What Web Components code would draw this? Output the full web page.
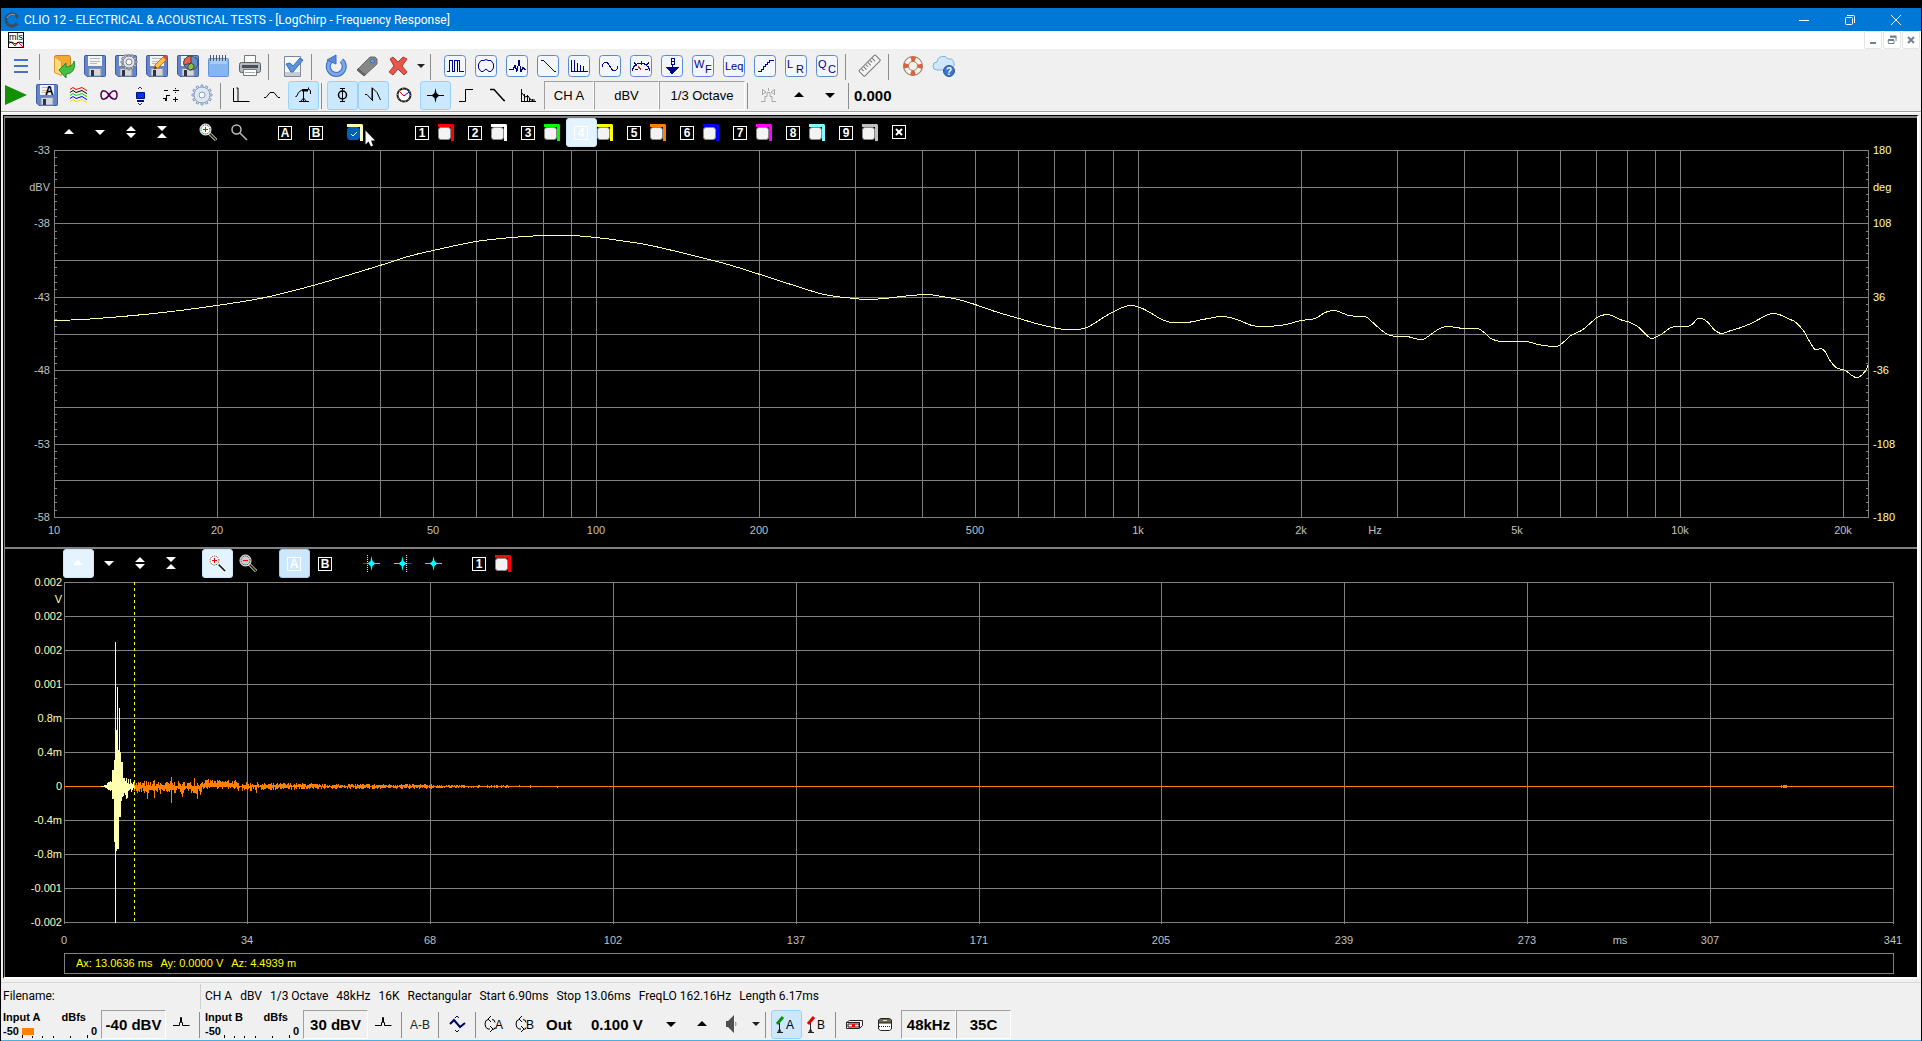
<!DOCTYPE html>
<html lang="en">
<head>
<meta charset="utf-8">
<title>CLIO 12</title>
<style>
  html, body {
    margin: 0;
    height: 100%;
    background: #000;
    font-family: "Liberation Sans", Arial, sans-serif;
    font-size: 13px;
    color: #000;
  }
</style>
</head>
<body>
<clio-window>
  <title-bar slot="title">CLIO 12 - ELECTRICAL &amp; ACOUSTICAL TESTS - [LogChirp - Frequency Response]</title-bar>
  <mdi-bar slot="title"></mdi-bar>

  <tool-bar slot="tools" class="main" aria-label="Main">
    <tool-button icon="menu" label="Menu"></tool-button>
    <tool-sep></tool-sep>
    <tool-button icon="open" label="Open"></tool-button>
    <tool-button icon="save" label="Save"></tool-button>
    <tool-button icon="saveSetup" label="Save setup"></tool-button>
    <tool-button icon="saveEdit" label="Rename"></tool-button>
    <tool-button icon="saveChart" label="Export graph"></tool-button>
    <tool-button icon="notes" label="Notes"></tool-button>
    <tool-button icon="print" label="Print"></tool-button>
    <tool-sep></tool-sep>
    <tool-button icon="options" label="Options"></tool-button>
    <tool-sep></tool-sep>
    <tool-button icon="reload" label="Reload"></tool-button>
    <tool-button icon="tag" label="Tag"></tool-button>
    <tool-button icon="remove" label="Delete"></tool-button>
    <tool-button icon="caret" label="Delete options" size="small"></tool-button>
    <tool-sep></tool-sep>
    <tool-button icon="mls" label="MLS"></tool-button>
    <tool-button icon="polar" label="Polar"></tool-button>
    <tool-button icon="impulse" label="Impulse"></tool-button>
    <tool-button icon="decay" label="Decay"></tool-button>
    <tool-button icon="fft" label="FFT"></tool-button>
    <tool-button icon="sine" label="Sinusoidal"></tool-button>
    <tool-button icon="meter" label="Multimeter"></tool-button>
    <tool-button icon="thiele" label="Thiele Small"></tool-button>
    <tool-button icon="wf" label="Wow and flutter"></tool-button>
    <tool-button icon="leq" label="Leq"></tool-button>
    <tool-button icon="linearity" label="Linearity"></tool-button>
    <tool-button icon="lr" label="Loudness"></tool-button>
    <tool-button icon="qc" label="Quality control"></tool-button>
    <tool-sep></tool-sep>
    <tool-button icon="ruler" label="Calibration"></tool-button>
    <tool-sep></tool-sep>
    <tool-button icon="buoy" label="Help"></tool-button>
    <tool-button icon="cloud" label="Online help"></tool-button>
  </tool-bar>

  <tool-bar slot="tools" class="measure" aria-label="Measurement">
    <tool-button icon="play" label="Go"></tool-button>
    <tool-button icon="autosave" label="Autosave"></tool-button>
    <tool-button icon="waves" label="Averaging"></tool-button>
    <tool-button icon="loop" label="Loop"></tool-button>
    <tool-button icon="speaker" label="Loudspeaker"></tool-button>
    <tool-button icon="math" label="Processing"></tool-button>
    <tool-button icon="gear" label="Settings"></tool-button>
    <tool-sep size="tight"></tool-sep>
    <tool-button icon="timeData" label="Time data"></tool-button>
    <tool-button icon="hump" label="Response"></tool-button>
    <tool-button icon="crane" label="Reference" state="on"></tool-button>
    <tool-sep size="tight"></tool-sep>
    <tool-button icon="phi" label="Phase" state="on"></tool-button>
    <tool-button icon="phase" label="Wrap phase" state="on"></tool-button>
    <tool-button icon="clock" label="Group delay"></tool-button>
    <tool-button icon="burst" label="Impulse response" state="on"></tool-button>
    <tool-button icon="step" label="Step response"></tool-button>
    <tool-button icon="slope" label="Schroeder decay"></tool-button>
    <tool-button icon="etc" label="ETC"></tool-button>
    <text-button style="width:50px">CH A</text-button>
    <text-button style="width:65px">dBV</text-button>
    <text-button style="width:86px">1/3 Octave</text-button>
    <tool-sep size="tight"></tool-sep>
    <tool-button icon="mirror" label="Mirror"></tool-button>
    <tool-button icon="up" label="Increase"></tool-button>
    <tool-button icon="down" label="Decrease"></tool-button>
    <tool-sep size="tight"></tool-sep>
    <value-label>0.000</value-label>
  </tool-bar>

  <chart-panel slot="charts" style="--indent:49px">
    <tool-bar slot="bar" aria-label="Frequency display">
      <tool-button icon="up" label="Scroll up" dark></tool-button>
      <tool-button icon="down" label="Scroll down" dark></tool-button>
      <tool-button icon="expand" label="Expand" dark></tool-button>
      <tool-button icon="compress" label="Compress" dark></tool-button>
      <tool-gap></tool-gap>
      <tool-button icon="zoomIn" label="Zoom in" dark></tool-button>
      <tool-button icon="zoomPlain" label="Zoom out" dark></tool-button>
      <tool-gap></tool-gap>
      <tool-button key="A" label="Marker A" dark></tool-button>
      <tool-button key="B" label="Marker B" dark></tool-button>
      <tool-gap></tool-gap>
      <curve-check label="Current curve" color="#ffffb0" checked><mouse-pointer></mouse-pointer></curve-check>
      <tool-gap wide></tool-gap>
      <tool-button key="1" label="Overlay 1" dark></tool-button><curve-check label="Show 1" color="#ff0000"></curve-check>
      <tool-button key="2" label="Overlay 2" dark></tool-button><curve-check label="Show 2" color="#ffffff"></curve-check>
      <tool-button key="3" label="Overlay 3" dark></tool-button><curve-check label="Show 3" color="#00ff00"></curve-check>
      <tool-button key="4" label="Overlay 4" dark state="hover"></tool-button><curve-check label="Show 4" color="#ffff00"></curve-check>
      <tool-button key="5" label="Overlay 5" dark></tool-button><curve-check label="Show 5" color="#ff8000"></curve-check>
      <tool-button key="6" label="Overlay 6" dark></tool-button><curve-check label="Show 6" color="#0000ff"></curve-check>
      <tool-button key="7" label="Overlay 7" dark></tool-button><curve-check label="Show 7" color="#ff00ff"></curve-check>
      <tool-button key="8" label="Overlay 8" dark></tool-button><curve-check label="Show 8" color="#80ffff"></curve-check>
      <tool-button key="9" label="Overlay 9" dark></tool-button><curve-check label="Show 9" color="#c0c0c0"></curve-check>
      <tool-button icon="clear" label="Clear overlays" dark></tool-button>
    </tool-bar>
    <response-plot></response-plot>
  </chart-panel>

  <chart-panel slot="charts" style="--indent:58px">
    <tool-bar slot="bar" aria-label="Time display">
      <tool-button icon="up" label="Scroll up" dark state="hover"></tool-button>
      <tool-button icon="down" label="Scroll down" dark></tool-button>
      <tool-button icon="expand" label="Expand" dark></tool-button>
      <tool-button icon="compress" label="Compress" dark></tool-button>
      <tool-gap></tool-gap>
      <tool-button icon="zoomIn" label="Zoom in" dark state="hover"></tool-button>
      <tool-button icon="zoomOut" label="Zoom out" dark></tool-button>
      <tool-gap></tool-gap>
      <tool-button key="A" label="Marker A" dark state="on"></tool-button>
      <tool-button key="B" label="Marker B" dark></tool-button>
      <tool-gap></tool-gap>
      <tool-button icon="gateStart" label="Start window" dark></tool-button>
      <tool-button icon="gateStop" label="Stop window" dark></tool-button>
      <tool-button icon="gateNone" label="No window" dark></tool-button>
      <tool-gap></tool-gap>
      <tool-button key="1" label="Overlay 1" dark></tool-button><curve-check label="Show 1" color="#ff0000"></curve-check>
    </tool-bar>
    <impulse-plot></impulse-plot>
    <read-out><span>Ax: 13.0636 ms</span><span>Ay: 0.0000 V</span><span>Az: 4.4939 m</span></read-out>
  </chart-panel>

  <status-line slot="status">
    <span slot="file">Filename:</span>
    <span>CH A</span><span>dBV</span><span>1/3 Octave</span><span>48kHz</span><span>16K</span><span>Rectangular</span><span>Start 6.90ms</span><span>Stop 13.06ms</span><span>FreqLO 162.16Hz</span><span>Length 6.17ms</span>
  </status-line>

  <tool-bar slot="status" class="levels" aria-label="Levels">
    <level-meter name="Input A" level="12"></level-meter>
    <text-button strong style="width:65px">-40 dBV</text-button>
    <tool-button icon="peak" label="Autorange A"></tool-button>
    <tool-sep size="snug"></tool-sep>
    <level-meter name="Input B" level="0"></level-meter>
    <text-button strong style="width:65px">30 dBV</text-button>
    <tool-button icon="peak" label="Autorange B"></tool-button>
    <tool-sep size="snug"></tool-sep>
    <tool-button icon="ab" label="Balanced input"></tool-button>
    <tool-sep size="snug"></tool-sep>
    <tool-button icon="generator" label="Generator"></tool-button>
    <tool-sep size="snug"></tool-sep>
    <tool-button icon="loopA" label="Loop A"></tool-button>
    <tool-button icon="loopB" label="Loop B"></tool-button>
    <value-label style="width:45px;padding-left:5px">Out</value-label>
    <value-label style="width:70px;padding-left:5px">0.100 V</value-label>
    <tool-button icon="down" label="Output down"></tool-button>
    <tool-button icon="up" label="Output up"></tool-button>
    <tool-button icon="volume" label="Generator on"></tool-button>
    <tool-button icon="caret" label="Signal" size="small"></tool-button>
    <tool-sep size="tight"></tool-sep>
    <tool-button icon="micA" label="Microphone A" state="on"></tool-button>
    <tool-button icon="micB" label="Microphone B"></tool-button>
    <tool-sep size="snug"></tool-sep>
    <tool-button icon="device" label="Hardware"></tool-button>
    <tool-button icon="turntable" label="Turntable"></tool-button>
    <text-button strong style="width:55px">48kHz</text-button>
    <text-button strong style="width:55px">35C</text-button>
  </tool-bar>
</clio-window>

<script>
const floppy = (extra = "") => `
  <path d="M2 1.500h19.500q1 0 1 1v19q0 1-1 1H4l-2.500-2.500V2.500z" fill="#6485cc" stroke="#3d5ba6"/>
  <rect x="5" y="2" width="14" height="10" fill="#f4f4f4"/>
  <path d="M7 4.500h10M7 7.500h10M7 9.500h7" stroke="#b8b8b8"/>
  <rect x="6" y="14.500" width="12" height="7.500" fill="#d4d7de" stroke="#8993a8"/>
  <rect x="8" y="16" width="3" height="6" fill="#2c3444"/>${extra}`;

const boxed = (inner) => `
  <rect x="1.500" y="1.500" width="21" height="21" rx="3" fill="#f3f6fb" stroke="#5b8ad2"/>
  <g fill="none" stroke="#000090" shape-rendering="crispEdges">${inner}</g>`;

const boxedText = (a, b, bx = 12, size = 12) => `
  <rect x="1.500" y="1.500" width="21" height="21" rx="3" fill="#f3f6fb" stroke="#5b8ad2"/>
  <g fill="#000090"><text x="3" y="14" font-size="${size}">${a}</text><text x="${bx}" y="19" font-size="${size}">${b}</text></g>`;

const cog = (cx, cy, r, fill, stroke) => {
  let teeth = "";
  for (let i = 0; i < 12; i += 1) {
    teeth += `<path d="M${cx - 1} ${cy - r}h2v3h-2z" transform="rotate(${i * 30} ${cx} ${cy})" fill="${fill}" stroke="${stroke}"/>`;
  }
  return `${teeth}<circle cx="${cx}" cy="${cy}" r="${r - 2}" fill="${fill}" stroke="${stroke}"/><circle cx="${cx}" cy="${cy}" r="${Math.round(r / 3)}" fill="#f8f8f8" stroke="${stroke}"/>`;
};

const lens = (sign, tone) => `
  <path d="M13 13l7 7" stroke="#fff" stroke-width="3"/>
  <path d="M13 12l8 8" stroke="#e0d060"/>
  <path d="M13 13l7 7" stroke="#111" stroke-width="1.500"/>
  <circle cx="9.500" cy="9.500" r="5.500" fill="${tone}" stroke="#fff"/>
  <circle cx="9.500" cy="9.500" r="4.500" fill="none" stroke="#222" stroke-dasharray="1 1"/>${sign}`;

const burst = `<path d="M4 12.500h17" stroke="#00ffff"/><path d="M12.500 5l1 5 3 2.500-3 2.500-1 5-1-5-3-2.500 3-2.500z" fill="#00ffff"/>`;
const micStand = (color) => `<path d="M9 5L3 12" stroke="${color}" stroke-width="3"/><path d="M5.500 11v9M3 20.500h6M4 20l1.500-3L7 20" stroke="#222" fill="none"/>`;
const cycle = `<path d="M9 4l-3 3 3 3M6 7.500Q3 8 3 12t3 5h2M8 14l3 3-3 3M10 7.500q3 0 3 3M10 17.500q3 0 3-2" stroke="#000" fill="none"/>`;

// All glyphs share a 25 x 25 grid with the middle pixel at 12.
const ICONS = {
  menu: `<path d="M5 6h14M5 12h14M5 18h14" stroke="#4272cc" stroke-width="2"/>`,
  open: `<path d="M2.500 3.500l1-2h14l1 2v12h-13z" fill="#f2a833" stroke="#c88416"/><path d="M2.500 2.500l7 5v14l-7-3z" fill="#ffd97e" stroke="#d99a2b"/><path d="M7 16l7-7v4c4 0 7-2 8-6 2 8-2 13-8 13v4z" fill="#43c140" stroke="#1f8a26"/>`,
  save: floppy(),
  saveSetup: floppy(cog(15, 8, 8, "#e4e6ea", "#7a808c")),
  saveEdit: floppy(`<path d="M9 15l1-4L19 2l3 3-9 9z" fill="#ffc04a" stroke="#b8721c"/><path d="M18 3l3 3 2-2-3-3z" fill="#e0453a"/><path d="M9 15l1-3 2 2z" fill="#333"/>`),
  saveChart: floppy(`<circle cx="15" cy="9" r="7" fill="#5e8fc4" stroke="#444"/><path d="M15 9V2a7 7 0 0 0-7 9z" fill="#e8604c" stroke="#444"/><path d="M15 9l-3 3q-1 4 3 4 4-2 3-5z" fill="#8ac43c" stroke="#444"/>`),
  notes: `<rect x="1.500" y="4.500" width="20" height="18" rx="1" fill="#86b6f0" stroke="#5f95d8"/><path d="M3 5h17v5H3z" fill="#a8ccf6"/><path d="M3.500 1v6M6.500 1v6M9.500 1v6M12.500 1v6M15.500 1v6M18.500 1v6" stroke="#4a5568"/>`,
  print: `<path d="M6.500 1.500h11v9h-11z" fill="#fafafa" stroke="#777"/><rect x="1.500" y="8.500" width="21" height="10" rx="2" fill="#b4b8be" stroke="#5c6068"/><path d="M4 11h16v3H4z" fill="#4a4e55"/><path d="M5.500 15.500h13v6h-13z" fill="#fff" stroke="#777"/><path d="M7 18.500h10" stroke="#aaa"/>`,
  options: `<path d="M3.500 2.500h16v20h-16z" fill="#f6f7f9" stroke="#7d8796"/><path d="M4 18h15v4H4z" fill="#c8ccd4"/><path d="M5 10l4-1 3 3 7-8 3 2-10 12h-2z" fill="#5b93dc" stroke="#3a70bb"/>`,
  reload: `<path d="M7 6.500A8 8 0 1 0 17.500 6.500" fill="none" stroke="#3f6fc0" stroke-width="5"/><path d="M7 6.500A8 8 0 1 0 17.500 6.500" fill="none" stroke="#7fa8e8" stroke-width="3"/><path d="M3 6l9-5v9z" fill="#5c8ad6" stroke="#3f6fc0"/>`,
  tag: `<path d="M15 3h5l2 2v5L9 22l-7-6z" fill="#868686" stroke="#6a6a6a"/><path d="M2 16l7 6 2-1-8-7z" fill="#606060"/><circle cx="17.500" cy="7" r="2" fill="#6fa4ea" stroke="#3d6db5"/>`,
  remove: `<path d="M4 5l3-2 5 5 5-5 4 2-5 7 5 6-3 3-6-6-5 6-4-3 5-6z" fill="#e4584c" stroke="#b8352c"/>`,
  caret: `<path d="M8 10h8l-4 4z" fill="#222"/>`,
  mls: boxed(`<path d="M4 17.500h2.500v-11h3v11h2v-11h3v11M14.500 6.500h2v11h4"/>`),
  polar: boxed(`<path d="M9 17.500H7L4.500 14v-4L7 6.500h3l2-1 2 1h3L19.500 10v4L17 17.500h-2L12 15z" shape-rendering="auto"/>`),
  impulse: boxed(`<path d="M4 15.500h4l2-4 2 6 2-11 2 11 2-4 2 2h1"/>`),
  decay: boxed(`<path d="M4.500 6.500h3l11 11h1"/>`),
  fft: boxed(`<path d="M4.500 6v11.500h16M7.500 6v11M10.500 9v8M13.500 11v6M16.500 12v5"/>`),
  sine: boxed(`<path d="M4 12.500c2-6 5-6 8 0s6 6 8 0"/>`),
  meter: boxed(`<path d="M3 16.500l2-4 4-3h6l4 3 2 4M5 8.500l3 3M20 8.500l-3 3M6 15.500h3M16 15.500h3M12.500 7v4"/><path d="M12 16l-3-4" stroke="#c02020"/>`),
  thiele: boxed(`<path d="M11 4.500h3v3h-3zM11 7.500h3v3h-3zM12.500 10v6M6 13.500h13"/><path d="M7 14h11l-3 3h-5z" fill="#000090"/><path d="M12.500 16v4M10 17.500l2 2 2-2"/>`),
  wf: boxedText("W", "F", 14, 11),
  leq: `<rect x="1.500" y="1.500" width="21" height="21" rx="3" fill="#f3f6fb" stroke="#5b8ad2"/><text x="3" y="16" font-size="11" fill="#000090">Leq</text>`,
  linearity: boxed(`<path d="M4.500 17.500h4v-2h2v-3h2v-2h2v-2h2v-2h4"/>`),
  lr: boxedText("L", "R", 12, 11),
  qc: boxedText("Q", "C", 13, 11),
  ruler: `<g transform="rotate(-45 12 12)"><rect x="0.500" y="7.500" width="23" height="8" rx="1" fill="#f2f2f2" stroke="#777"/><path d="M4 8v3M7 8v4M10 8v3M13 8v4M16 8v3M19 8v4" stroke="#777"/></g>`,
  buoy: `<circle cx="12" cy="12" r="7" fill="none" stroke="#9a8070" stroke-width="6"/><circle cx="12" cy="12" r="7" fill="none" stroke="#f6f3f0" stroke-width="4"/><circle cx="12" cy="12" r="7" fill="none" stroke="#dd6238" stroke-width="5" stroke-dasharray="4.400 6.600" stroke-dashoffset="2.200"/>`,
  cloud: `<path d="M5 16a4 4 0 0 1 0-8 6 6 0 0 1 11-3 5 5 0 0 1 4 9l-2 2z" fill="#cfe7fa" stroke="#7fb2dc"/><circle cx="17" cy="17" r="5.500" fill="#3d74cc" stroke="#2a559e"/><text x="14" y="21" font-size="10" font-weight="700" fill="#fff">?</text>`,

  play: `<path d="M1 2l22 10L1 22z" fill="#129000"/>`,
  autosave: floppy(`<text x="10" y="12" font-size="12" font-weight="700" fill="#000">A</text>`),
  waves: ["#ff0000", "#000", "#00d800", "#0000ff", "#f0e000"].map((c, i) =>
    `<path d="M4 ${6.5 + i * 3}l3-2 3 2 3-1 3-1 3 2 2 1" fill="none" stroke="${c}"/>`).join(""),
  loop: `<path d="M12 12c-3-5-8-6-8 0s5 5 8 0 8-6 8 0-5 5-8 0z" fill="none" stroke="#500050" stroke-width="1.500"/>`,
  speaker: `<path d="M8.500 9.500h8v6h-8z" fill="#0030f0" stroke="#001080"/><path d="M9 17h7v2H9z" fill="#001080"/><path d="M10 6l2-2 2 2M10 20l2 2 2-2" fill="none" stroke="#333"/>`,
  math: `<g stroke="#000" fill="none" shape-rendering="crispEdges"><path d="M5 7.500h4M14 7.500h6M16.500 5v1M16.500 9v1M14 16.500h5M16.500 14v5"/><path d="M4 15h2l1 3V12.500h4"/></g>`,
  gear: cog(12, 12, 10, "#dfe7f2", "#8a9fc0"),
  timeData: `<path d="M4.500 5v13.500h16M7.500 5h1.500v13" fill="none" stroke="#000"/>`,
  hump: `<path d="M4 14.500h2l4-5h4l4 5h2" fill="none" stroke="#000"/>`,
  crane: `<path d="M8 18.500h10M12.500 8v10M10 18l2.500-3 2.500 3M4.500 13.500h1l2-4 4-3h6v-2M17.500 6l2 1.500V11" fill="none" stroke="#000"/><path d="M11 7.500h6" stroke="#000" stroke-width="2"/>`,
  phi: `<path d="M12.500 5v14M10 5.500h5M10 18.500h5" stroke="#000"/><ellipse cx="12.500" cy="12" rx="4" ry="4" fill="none" stroke="#000" stroke-width="1.500"/>`,
  phase: `<path d="M4 11.500h2l5 5.500V4.500M11.500 18V5q5 3 8 12" fill="none" stroke="#000"/>`,
  clock: `<circle cx="12" cy="12" r="6.500" fill="#fff" stroke="#222" stroke-width="2"/><circle cx="12" cy="12" r="6.500" fill="none" stroke="#c8b890" stroke-dasharray="1 3"/><path d="M12 13L8 9" stroke="#f00"/><path d="M12 13l5-4" stroke="#00c"/>`,
  burst: `<path d="M4 12.500h17" stroke="#000"/><path d="M12.500 5l1 5 3 2.500-3 2.500-1 5-1-5-3-2.500 3-2.500z" fill="#000"/>`,
  step: `<path d="M5 18.500h6.500v-12H19" fill="none" stroke="#000"/>`,
  slope: `<path d="M5 6.500h4l10 11h1" fill="none" stroke="#000" stroke-width="1.500"/>`,
  etc: `<path d="M5.500 6v12.500M5 18.500h15M8.500 11v7M11.500 12v6M13.500 15v3M16.500 16v2M6 10l3 4 3-1 3 4h4" fill="none" stroke="#000"/>`,
  mirror: `<path d="M12.500 5v3M5 18.500h4v-5h2v-4h3v4h2v5h4M6.500 6v6M18.500 6v6M7 7l3 2-3 2M18 7l-3 2 3 2" fill="none" stroke="#a8a8a8"/>`,
  up: `<path d="M7 14h10l-5-5z" fill="currentColor"/>`,
  down: `<path d="M7 10h10l-5 5z" fill="currentColor"/>`,
  expand: `<path d="M7 11h10l-5-5zM7 13h10l-5 5z" fill="currentColor"/>`,
  compress: `<path d="M7 6h10l-5 5zM7 18h10l-5-5z" fill="currentColor"/>`,
  zoomIn: lens(`<path d="M9.500 7v5M7 9.500h5" stroke="#f00"/>`, "#fff"),
  zoomPlain: `<path d="M13 13l7 7" stroke="#bbb" stroke-width="1.500"/><circle cx="9.500" cy="9.500" r="4.500" fill="#000" stroke="#bbb" stroke-width="1.500"/>`,
  zoomOut: lens(`<path d="M7 9.500h5" stroke="#f00"/>`, "#ccc"),
  clear: `<rect x="5.500" y="5.500" width="13" height="13" fill="none" stroke="#fff"/><path d="M9 9l6 6M15 9l-6 6" stroke="#fff" stroke-width="2"/>`,
  gateStart: `${burst}<path d="M4 12.500h4" stroke="#f00"/><path d="M8.500 4v17" stroke="#ff0" stroke-dasharray="1 1"/>`,
  gateStop: `${burst}<path d="M17 12.500h4" stroke="#f00"/><path d="M16.500 4v17" stroke="#ff0" stroke-dasharray="1 1"/>`,
  gateNone: burst,

  peak: `<path d="M4 13.500h6.500v-3h1v-5h1v5h1v3h7" fill="none" stroke="#000"/>`,
  ab: `<text x="12" y="17" font-size="12" text-anchor="middle" fill="#222">A-B</text>`,
  generator: `<path d="M5 12l4-4 6 7 5-4" fill="none" stroke="#000060" stroke-width="2"/><path d="M10 6l2-2 2 2M10 18l2 2 2-2" fill="none" stroke="#000060"/>`,
  loopA: `${cycle}<text x="13" y="17" font-size="12" fill="#000">A</text>`,
  loopB: `${cycle}<text x="13" y="17" font-size="12" fill="#000">B</text>`,
  volume: `<path d="M5 9h2l6-6v18l-6-6H5z" fill="#505050"/><path d="M14.500 10q1 2 0 4" fill="none" stroke="#888"/>`,
  micA: `${micStand("#109010")}<text x="12" y="17" font-size="12" fill="#000">A</text>`,
  micB: `${micStand("#e00000")}<text x="12" y="17" font-size="12" fill="#000">B</text>`,
  device: `<path d="M4.500 10.500l3-2h13v5l-3 3h-13zM4 10.500h13M17.500 10v6" fill="#fff" stroke="#222"/><path d="M6 12h11v3H6z" fill="#fff" stroke="#500"/><path d="M10 12h3v3h-3z" fill="#f00"/>`,
  turntable: `<path d="M5.500 10v7l2 1.500h9l2-1.500v-7" fill="#fff" stroke="#222"/><path d="M5.500 8l2-1.500h9l2 1.500v3h-13z" fill="#6a6a50" stroke="#222"/><path d="M6 14.500h12" stroke="#222" stroke-dasharray="1 1"/><path d="M10 8.500h4" stroke="#ddd"/>`,
};

const iconSvg = (name) => `<svg viewBox="0 0 25 25" width="25" height="25" aria-hidden="true" font-family="Liberation Sans, Arial, sans-serif">${ICONS[name] || ""}</svg>`;

class ClioWindow extends HTMLElement {
  constructor() {
    super();
    this.attachShadow({ mode: "open" });
    this.shadowRoot.innerHTML = `
      <style>
        :host {
          display: flex;
          flex-direction: column;
          box-sizing: border-box;
          min-height: 100vh;
          margin: 0 1px;
          padding-top: 8px;
        }
        .body {
          flex: 1;
          display: flex;
          flex-direction: column;
          background: #f0f0f0;
          border-bottom: 1px solid #48b0e0;
        }
        main {
          flex: 1;
          display: grid;
          grid-template-rows: minmax(200px, 431fr) minmax(200px, 430fr);
          margin: 2px 2px 3px;
          border: solid;
          border-width: 1px 2px 2px 1px;
          border-color: #000 #fff #fff #000;
        }
        .tools {
          border-bottom: 1px solid #a0a0a0;
          box-shadow: 0 1px 0 #fff;
          margin-bottom: 1px;
        }
        .status { border-top: 1px solid #d8d8d8; }
      </style>
      <slot name="title"></slot>
      <div class="body">
        <div class="tools"><slot name="tools"></slot></div>
        <main><slot name="charts"></slot></main>
        <div class="status"><slot name="status"></slot></div>
      </div>
    `;
  }
}

class TitleBar extends HTMLElement {
  constructor() {
    super();
    this.attachShadow({ mode: "open" });
    this.shadowRoot.innerHTML = `
      <style>
        :host {
          display: flex;
          align-items: center;
          height: 23px;
          background: #0078d7;
          color: #fff;
          font: 12px Roboto, "Noto Sans", sans-serif;
        }
        .logo { width: 18px; margin: 0 3px 0 2px; }
        h1 { flex: 1; margin: 0; font: inherit; white-space: nowrap; overflow: hidden; }
        button {
          width: 46px;
          height: 23px;
          padding: 0;
          border: 0;
          background: none;
          color: inherit;
        }
        button:last-child { margin-right: 2px; }
        button svg { display: block; margin: auto; }
      </style>
      <svg class="logo" viewBox="0 0 18 18" width="18" height="18" aria-hidden="true"><circle cx="9" cy="9" r="6" fill="none" stroke="#3f4a5c" stroke-width="3" stroke-dasharray="31 7" transform="rotate(35 9 9)"/><path d="M4 7a6 6 0 0 1 8-3" fill="none" stroke="#9aa8bc"/></svg>
      <h1><slot></slot></h1>
      <button type="button" aria-label="Minimize"><svg width="12" height="12" viewBox="0 0 12 12"><path d="M1 6.500h10" stroke="#fff"/></svg></button>
      <button type="button" aria-label="Restore"><svg width="12" height="12" viewBox="0 0 12 12"><rect x="1.500" y="3.500" width="7" height="7" rx="1" fill="none" stroke="#fff"/><path d="M3 1.500h6.500q1 0 1 1V9" fill="none" stroke="#fff"/></svg></button>
      <button type="button" aria-label="Close"><svg width="12" height="12" viewBox="0 0 12 12"><path d="M1 1l10 10M11 1L1 11" stroke="#fff"/></svg></button>
    `;
  }
}

class MdiBar extends HTMLElement {
  constructor() {
    super();
    this.attachShadow({ mode: "open" });
    this.shadowRoot.innerHTML = `
      <style>
        :host {
          display: flex;
          align-items: center;
          gap: 1px;
          height: 18px;
          padding: 0 1px 0 7px;
          background: #fff;
        }
        .doc { margin-right: auto; }
        button {
          width: 18px;
          height: 18px;
          padding: 0;
          background: #fff;
          border: 1px solid #e4e4e4;
          border-radius: 2px;
        }
        button svg { display: block; margin: auto; }
      </style>
      <svg class="doc" viewBox="0 0 16 16" width="16" height="16" aria-hidden="true"><rect x="0.500" y="0.500" width="15" height="15" fill="#fff" stroke="#000"/><text x="1" y="8" font-size="9" font-family="Liberation Sans, Arial, sans-serif">mls</text><path d="M1 9l3 2 3 3 3-4 5 5" fill="none" stroke="#f00"/><path d="M1 11l3-1 3 2 4-2 4 1" fill="none" stroke="#000"/></svg>
      <button type="button" aria-label="Minimize document"><svg width="10" height="10" viewBox="0 0 10 10"><path d="M2 8h6" stroke="#728090" stroke-width="2"/></svg></button>
      <button type="button" aria-label="Restore document"><svg width="10" height="10" viewBox="0 0 10 10"><path d="M1 5.500h6v3H1.500zM3 2h6v4" fill="none" stroke="#728090"/><path d="M3 1.500h6.500M1 5h6" stroke="#728090" stroke-width="2"/></svg></button>
      <button type="button" aria-label="Close document"><svg width="10" height="10" viewBox="0 0 10 10"><path d="M2 2l6 6M8 2L2 8" stroke="#728090" stroke-width="2"/></svg></button>
    `;
  }
}

class ToolBar extends HTMLElement {
  constructor() {
    super();
    this.attachShadow({ mode: "open" });
    this.shadowRoot.innerHTML = `
      <style>
        :host { display: flex; height: 29px; }
        :host(.main) { padding: 3px 0 0 5px; }
        :host(.measure), :host(.levels) { height: 30px; }
      </style>
      <slot></slot>
    `;
  }

  connectedCallback() {
    this.setAttribute("role", "toolbar");
  }
}

class ToolSep extends HTMLElement {
  constructor() {
    super();
    this.attachShadow({ mode: "open" });
    this.shadowRoot.innerHTML = `
      <style>
        :host { display: block; box-sizing: border-box; width: 12px; height: 29px; padding: 2px 0 1px 2px; }
        :host([size="tight"]) { width: 8px; }
        :host([size="snug"]) { width: 6px; }
        hr { width: 0; height: 100%; margin: 0; border: 0; border-left: 1px solid #8c8c8c; }
      </style>
      <hr>
    `;
  }
}

class ToolGap extends HTMLElement {
  constructor() {
    super();
    this.attachShadow({ mode: "open" });
    this.shadowRoot.innerHTML = `
      <style>
        :host { display: block; width: 15px; }
        :host([wide]) { width: 38px; }
      </style>
    `;
  }
}

class ToolButton extends HTMLElement {
  constructor() {
    super();
    this.attachShadow({ mode: "open" });
    const key = this.getAttribute("key");
    const face = key ? `<span class="key">${key}</span>` : iconSvg(this.getAttribute("icon"));
    this.shadowRoot.innerHTML = `
      <style>
        :host { display: block; width: 31px; height: 29px; }
        :host([size="small"]) { width: 14px; }
        button {
          display: flex;
          align-items: center;
          justify-content: center;
          width: 100%;
          height: 100%;
          padding: 0;
          overflow: hidden;
          background: none;
          border: 1px solid transparent;
          border-radius: 3px;
          color: #000;
        }
        :host([dark]) button { color: #fff; }
        :host([state="on"]) button { background: #cce8ff; border-color: #99d1ff; }
        :host([state="hover"]) button { background: #e5f3ff; border-color: #cce8ff; }
        .key {
          box-sizing: border-box;
          width: 14px;
          height: 14px;
          margin: 1px 1px 0 0;
          border: 1px solid #fff;
          font: 700 12px/12px "Liberation Sans", Arial, sans-serif;
          text-align: center;
        }
        svg { display: block; flex: none; }
      </style>
      <button type="button" aria-label="${this.getAttribute("label")}">${face}</button>
    `;
  }
}

class TextButton extends HTMLElement {
  constructor() {
    super();
    this.attachShadow({ mode: "open" });
    this.shadowRoot.innerHTML = `
      <style>
        :host { display: block; height: 29px; }
        button {
          width: 100%;
          height: 100%;
          padding: 0;
          background: #f0f0f0;
          border: 1px solid;
          border-color: #a0a0a0 #fff #fff #a0a0a0;
          font: 13px "Liberation Sans", Arial, sans-serif;
          color: #000;
          white-space: nowrap;
        }
        :host([strong]) button { font-size: 15px; font-weight: 700; }
      </style>
      <button type="button"><slot></slot></button>
    `;
  }
}

class ValueLabel extends HTMLElement {
  constructor() {
    super();
    this.attachShadow({ mode: "open" });
    this.shadowRoot.innerHTML = `
      <style>
        :host { display: block; box-sizing: border-box; font-size: 15px; font-weight: 700; line-height: 29px; white-space: nowrap; }
      </style>
      <slot></slot>
    `;
  }
}

class CurveCheck extends HTMLElement {
  constructor() {
    super();
    this.attachShadow({ mode: "open" });
    const checked = this.hasAttribute("checked") ? "checked" : "";
    this.shadowRoot.innerHTML = `
      <style>
        :host { display: block; position: relative; width: 22px; align-self: center; }
        label {
          display: block;
          box-sizing: border-box;
          width: 16px;
          height: 17px;
          border: solid ${this.getAttribute("color")};
          border-width: 3px 3px 0 0;
          border-radius: 0 2px 0 0;
        }
        input {
          appearance: none;
          display: block;
          width: 13px;
          height: 13px;
          margin: 0;
          background: #f3f3f3;
          border: 1px solid #8a8a8a;
          border-radius: 3px;
        }
        input:checked { background: #005fb8; border-color: #005fb8; }
        .tick { position: absolute; left: 3px; top: 6px; display: none; pointer-events: none; }
        input:checked ~ .tick { display: block; }
      </style>
      <label><input type="checkbox" aria-label="${this.getAttribute("label")}" ${checked}><svg class="tick" width="8" height="8" viewBox="0 0 8 8"><path d="M1 4l2 2 4-4" fill="none" stroke="#fff"/></svg></label>
      <slot></slot>
    `;
  }
}

class MousePointer extends HTMLElement {
  constructor() {
    super();
    this.attachShadow({ mode: "open" });
    this.shadowRoot.innerHTML = `
      <style>
        :host { display: block; position: absolute; left: 18px; top: 6px; pointer-events: none; }
        svg { display: block; }
      </style>
      <svg width="12" height="18" viewBox="0 0 12 18"><path d="M0.500 0.500v14l3-3 2.500 5 2-1-2-5h4z" fill="#fff"/></svg>
    `;
  }
}

class ChartPanel extends HTMLElement {
  constructor() {
    super();
    this.attachShadow({ mode: "open" });
    this.shadowRoot.innerHTML = `
      <style>
        :host {
          display: flex;
          flex-direction: column;
          min-width: 0;
          background: #000;
          border: solid #808080;
          border-width: 2px 0 0 1px;
        }
        .bar { padding-left: var(--indent, 48px); }
      </style>
      <div class="bar"><slot name="bar"></slot></div>
      <slot></slot>
    `;
  }
}

class ReadOut extends HTMLElement {
  constructor() {
    super();
    this.attachShadow({ mode: "open" });
    this.shadowRoot.innerHTML = `
      <style>
        :host {
          display: flex;
          gap: 8px;
          margin: 0 23px 3px 59px;
          padding-left: 11px;
          border: 1px solid #808080;
          color: #ffff00;
          font: 11px/19px "Liberation Sans", Arial, sans-serif;
        }
      </style>
      <slot></slot>
    `;
  }
}

// Base for both graphs: redraws its SVG whenever the box changes size.
class PlotBase extends HTMLElement {
  constructor() {
    super();
    this.attachShadow({ mode: "open" });
    this.shadowRoot.innerHTML = `
      <style>
        :host { display: block; flex: 1; min-height: 0; position: relative; }
        svg { position: absolute; inset: 0; width: 100%; height: 100%; overflow: visible; }
        line, path { shape-rendering: crispEdges; fill: none; stroke: #808080; stroke-width: 1; }
        text { font: 11px "Liberation Sans", Arial, sans-serif; fill: #c0c0c0; }
        .y { fill: #ffffb0; }
      </style>
      <svg role="img"></svg>
    `;
    this.svg = this.shadowRoot.querySelector("svg");
  }

  connectedCallback() {
    new ResizeObserver(() => this.render()).observe(this);
    this.render();
  }

  render() {
    const w = this.clientWidth;
    const h = this.clientHeight;
    if (!w || !h) return;
    const m = this.margins;
    this.svg.innerHTML = this.draw({ l: m.left, t: m.top, w: w - m.left - m.right, h: h - m.top - m.bottom });
  }

  vline(x, y1, y2) {
    const px = Math.round(x) + 0.5;
    return `<line x1="${px}" x2="${px}" y1="${y1}" y2="${y2}"/>`;
  }

  hline(y, x1, x2) {
    const py = Math.round(y) + 0.5;
    return `<line x1="${x1}" x2="${x2}" y1="${py}" y2="${py}"/>`;
  }

  label(x, y, text, anchor, cls = "") {
    return `<text x="${Math.round(x)}" y="${Math.round(y)}" text-anchor="${anchor}" class="${cls}">${text}</text>`;
  }
}

// Curve samples on a 1814 x 367 grid (10 Hz .. 22.2 kHz, -33 .. -58 dBV).
const RESPONSE = [
  [0,170],[28,169],[68,166],[109,162],[163,155],[211,147],[259,135],[293,125],[326,115],[354,106],[379,100],
  [422,91],[458,87],[489,85],[517,85],[542,87],[586,93],[610,98],[643,106],[674,114],[706,124],[737,134],
  [766,143],[782,146],[801,148],[812,149],[831,148],[847,146],[872,144],[888,146],[904,149],[921,154],
  [941,161],[965,168],[986,174],[1010,179],[1025,179],[1035,176],[1051,166],[1066,158],[1076,155],[1086,157],
  [1096,162],[1106,168],[1117,172],[1133,172],[1149,169],[1166,166],[1176,167],[1188,171],[1198,175],[1208,176],
  [1226,175],[1236,173],[1247,170],[1261,168],[1271,162],[1280,160],[1287,162],[1295,165],[1306,166],[1313,167],
  [1322,175],[1332,183],[1341,186],[1353,186],[1365,189],[1371,188],[1384,179],[1392,176],[1402,177],[1410,178],
  [1423,178],[1429,181],[1437,188],[1447,191],[1472,191],[1484,194],[1502,196],[1509,192],[1517,185],[1529,179],
  [1543,167],[1552,164],[1558,165],[1566,169],[1576,172],[1585,177],[1593,185],[1598,188],[1607,184],[1617,177],
  [1626,176],[1634,176],[1639,173],[1644,168],[1650,169],[1655,173],[1660,179],[1667,183],[1677,180],[1687,177],
  [1699,172],[1710,166],[1718,163],[1725,164],[1734,168],[1742,172],[1750,181],[1755,190],[1760,198],[1763,199],
  [1767,198],[1771,201],[1776,210],[1782,217],[1791,220],[1798,225],[1802,227],[1806,226],[1811,221],[1814,215],
];

class ResponsePlot extends PlotBase {
  get margins() {
    return { left: 49, right: 49, top: 3, bottom: 30 };
  }

  draw({ l, t, w, h }) {
    const decade = (w * 542) / 1814;
    const fx = (f) => l + Math.log10(f / 10) * decade;
    const r = l + w;
    let out = "";

    for (let i = 0; i <= 10; i += 1) {
      out += this.hline(t + (h * i) / 10, l, r + 1);
    }
    for (let i = 1; i < 50; i += 1) {
      out += this.hline(t + (h * i) / 50, l, l + 3);
      out += this.hline(t + (h * i) / 50, r - 2, r);
    }
    for (let base = 10; base <= 10000; base *= 10) {
      for (let k = 1; k < 10; k += 1) {
        if (base * k <= 20000) out += this.vline(fx(base * k), t, t + h);
      }
    }
    out += this.vline(r, t, t + h + 1);

    [-33, -38, -43, -48, -53, -58].forEach((v, i) => {
      out += this.label(l - 4, t + (h * i) / 5 + 4, v, "end");
    });
    out += this.label(l - 4, t + h / 10 + 4, "dBV", "end");
    [180, 108, 36, -36, -108, -180].forEach((v, i) => {
      out += this.label(r + 5, t + (h * i) / 5 + 4, v, "start", "y");
    });
    out += this.label(r + 5, t + h / 10 + 4, "deg", "start", "y");
    [[10, "10"], [20, "20"], [50, "50"], [100, "100"], [200, "200"], [500, "500"], [1000, "1k"], [2000, "2k"], [5000, "5k"], [10000, "10k"], [20000, "20k"]].forEach(([f, text]) => {
      out += this.label(fx(f), t + h + 17, text, "middle");
    });
    out += this.label(l + w * 0.728, t + h + 17, "Hz", "middle");

    const pts = RESPONSE.map(([x, y]) => [l + (x * w) / 1814, t + (y * h) / 367 + 0.5]);
    let d = `M${pts[0]}`;
    for (let i = 0; i < pts.length - 1; i += 1) {
      const p0 = pts[i - 1] || pts[i];
      const [p1, p2] = [pts[i], pts[i + 1]];
      const p3 = pts[i + 2] || p2;
      d += `C${p1[0] + (p2[0] - p0[0]) / 6} ${p1[1] + (p2[1] - p0[1]) / 6} ${p2[0] - (p3[0] - p1[0]) / 6} ${p2[1] - (p3[1] - p1[1]) / 6} ${p2}`;
    }
    return `${out}<path d="${d}" style="stroke:#ffffb0"/>`;
  }
}

// [x, above zero, below zero] on a 1829 x 340 grid.
const DIRECT = [
  [37,0,0],[38,0,0],[39,0,0],[40,1,0],[41,1,1],[42,1,1],[43,3,2],[44,4,3],[45,4,3],[46,5,4],[47,4,3],[48,16,12],
  [49,16,12],[50,26,55],[51,144,136],[52,56,64],[53,99,62],[54,36,62],[55,78,30],[56,34,30],[57,24,14],[58,24,10],
  [59,8,9],[60,8,6],[61,5,8],[62,8,12],[63,3,11],[64,7,4],[65,2,3],[66,7,2],[67,3,5],[68,2,3],[69,4,1],
];
const SPIKES = {
  70: [6, 4], 83: [1, 12], 90: [6, 11], 93: [2, 5], 107: [9, 16], 118: [2, 10], 130: [8, 6],
  133: [3, 12], 136: [2, 8], 144: [7, 0], 147: [5, 0], 164: [6, 2], 192: [1, 6],
};

class ImpulsePlot extends PlotBase {
  get margins() {
    return { left: 59, right: 24, top: 4, bottom: 31 };
  }

  reflections() {
    const bars = [];
    let seed = 7;
    const next = () => {
      seed = (seed * 16807) % 2147483647;
      return seed / 2147483647;
    };
    for (let x = 70; x < 640; x += 1) {
      let amp = 1;
      if (x < 138) amp = 6;
      else if (x < 195) amp = 4;
      else if (x < 250) amp = 3;
      else if (x < 370) amp = 2;
      let shift = 0;
      if (x < 138) shift = -1;
      else if (x < 172) shift = 2;
      const sparse = x > 400 && next() < (x - 350) / 150;
      let up = sparse ? 0 : Math.max(0, Math.round(next() * amp + shift));
      let down = sparse ? 0 : Math.max(0, Math.round(next() * amp - shift));
      if (SPIKES[x]) [up, down] = SPIKES[x];
      bars.push([x, up, down]);
    }
    [1717, 1719, 1720, 1721, 1722].forEach((x) => bars.push([x, 1, 1]));
    return bars;
  }

  draw({ l, t, w, h }) {
    const r = l + w;
    const zero = Math.round(t + h * 0.6);
    let out = "";
    for (let i = 0; i <= 10; i += 1) {
      out += this.hline(t + (h * i) / 10, l, r + 1);
      out += this.vline(l + (w * i) / 10, t, t + h + 2);
    }

    const cut = Math.round(l + (w * 13.0636) / 341.3) + 0.5;
    out += `<path d="M${l} ${zero + 0.5}H${r}" style="stroke:#ff8000"/>`;
    const bars = (list) => list.map(([x, up, down]) => {
      const px = Math.round(l + (x * w) / 1829) + 0.5;
      return `M${px} ${zero - (up * h) / 340}V${zero + 1 + (down * h) / 340}`;
    }).join("");
    out += `<path d="${bars(this.reflections())}" style="stroke:#ff8000"/>`;
    out += `<path d="${bars(DIRECT)}" style="stroke:#ffffb0"/>`;
    out += `<path d="M${cut} ${t}V${t + h}" style="stroke:#ffff00" stroke-dasharray="3 3"/>`;

    ["0.002", "0.002", "0.002", "0.001", "0.8m", "0.4m", "0", "-0.4m", "-0.8m", "-0.001", "-0.002"].forEach((v, i) => {
      out += this.label(l - 2, t + (h * i) / 10 + 4, v, "end", "y");
    });
    out += this.label(l - 2, t + h / 20 + 4, "V", "end", "y");
    [0, 34, 68, 102, 137, 171, 205, 239, 273, 307, 341].forEach((v, i) => {
      out += this.label(l + (w * i) / 10, t + h + 22, v, "middle");
    });
    return out + this.label(l + w * 0.8505, t + h + 22, "ms", "middle");
  }
}

class StatusLine extends HTMLElement {
  constructor() {
    super();
    this.attachShadow({ mode: "open" });
    this.shadowRoot.innerHTML = `
      <style>
        :host {
          display: flex;
          height: 27px;
          font: 12px/27px Roboto, "Noto Sans", sans-serif;
          white-space: nowrap;
        }
        .file { width: 197px; padding-left: 2px; }
        .info {
          display: flex;
          gap: 8px;
          height: 25px;
          padding-left: 4px;
          margin-top: 1px;
          line-height: 25px;
          border-left: 1px solid #d0d0d0;
        }
      </style>
      <div class="file"><slot name="file"></slot></div>
      <div class="info"><slot></slot></div>
    `;
  }
}

class LevelMeter extends HTMLElement {
  constructor() {
    super();
    this.attachShadow({ mode: "open" });
    this.shadowRoot.innerHTML = `
      <style>
        :host { display: block; width: 100px; font-size: 11px; font-weight: 700; line-height: 14px; }
        .row { display: flex; gap: 2px; padding-left: 2px; }
        .unit { margin-left: auto; padding-right: 15px; }
        .scale { flex: none; width: 68px; height: 14px; }
        svg { display: block; }
      </style>
      <div class="row"><span>${this.getAttribute("name")}</span><span class="unit">dBfs</span></div>
      <div class="row">
        <span>-50</span>
        <svg class="scale" viewBox="0 0 68 14" shape-rendering="crispEdges" role="img" aria-label="Level">
          <rect x="1" y="4" width="${this.getAttribute("level")}" height="7" fill="#ff8000"/>
          <path d="M1.500 11v3M11.500 12v2M21.500 12v2M32.500 12v2M49.500 12v2M66.500 11v3" stroke="#000"/>
        </svg>
        <span>0</span>
      </div>
    `;
  }
}

customElements.define("clio-window", ClioWindow);
customElements.define("title-bar", TitleBar);
customElements.define("mdi-bar", MdiBar);
customElements.define("tool-bar", ToolBar);
customElements.define("tool-sep", ToolSep);
customElements.define("tool-gap", ToolGap);
customElements.define("tool-button", ToolButton);
customElements.define("text-button", TextButton);
customElements.define("value-label", ValueLabel);
customElements.define("curve-check", CurveCheck);
customElements.define("mouse-pointer", MousePointer);
customElements.define("chart-panel", ChartPanel);
customElements.define("read-out", ReadOut);
customElements.define("response-plot", ResponsePlot);
customElements.define("impulse-plot", ImpulsePlot);
customElements.define("status-line", StatusLine);
customElements.define("level-meter", LevelMeter);
</script>
</body>
</html>
